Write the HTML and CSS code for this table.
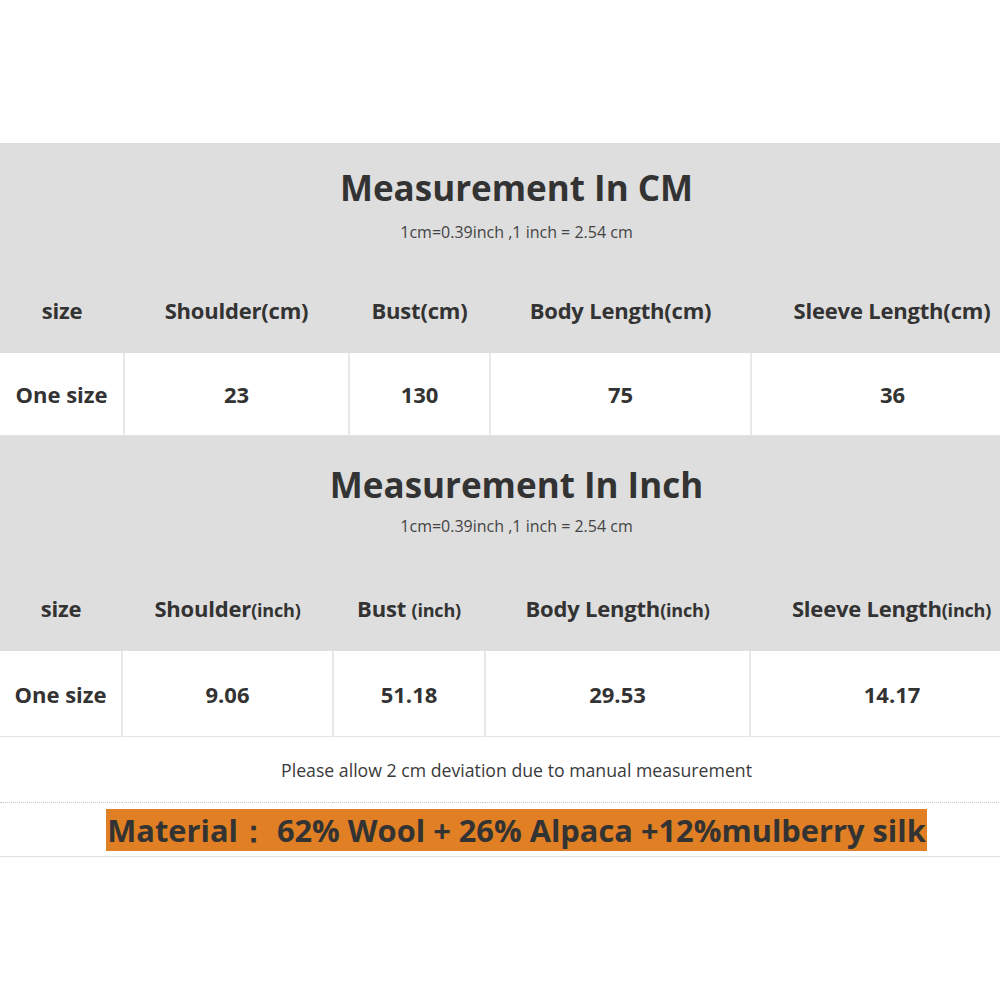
FILE: index.html
```html
<!DOCTYPE html>
<html>
<head>
<meta charset="utf-8">
<link rel="stylesheet" href="styles.css">
</head>
<body>
<div class="page">
  <table class="chart chart-cm">
    <colgroup>
      <col class="c1"><col class="c2"><col class="c3"><col class="c4"><col class="c5">
    </colgroup>
    <tr class="title-row">
      <td colspan="5">
        <div class="title">Measurement In CM</div>
        <div class="sub">1cm=0.39inch ,1 inch = 2.54 cm</div>
      </td>
    </tr>
    <tr class="head-row">
      <th>size</th><th>Shoulder(cm)</th><th>Bust(cm)</th><th>Body Length(cm)</th><th>Sleeve Length(cm)</th>
    </tr>
    <tr class="data-row">
      <td>One size</td><td>23</td><td>130</td><td>75</td><td>36</td>
    </tr>
  </table>
  <table class="chart chart-inch">
    <colgroup>
      <col class="c1"><col class="c2"><col class="c3"><col class="c4"><col class="c5">
    </colgroup>
    <tr class="title-row">
      <td colspan="5">
        <div class="title">Measurement In Inch</div>
        <div class="sub">1cm=0.39inch ,1 inch = 2.54 cm</div>
      </td>
    </tr>
    <tr class="head-row">
      <th>size</th><th>Shoulder<span class="unit">(inch)</span></th><th>Bust <span class="unit">(inch)</span></th><th>Body Length<span class="unit">(inch)</span></th><th>Sleeve Length<span class="unit">(inch)</span></th>
    </tr>
    <tr class="data-row">
      <td>One size</td><td>9.06</td><td>51.18</td><td>29.53</td><td>14.17</td>
    </tr>
    <tr class="note-row">
      <td colspan="5">Please allow 2 cm deviation due to manual measurement</td>
    </tr>
    <tr class="material-row">
      <td colspan="5"><span class="material">Material：&nbsp;62% Wool + 26% Alpaca +12%mulberry silk</span></td>
    </tr>
  </table>
</div>
</body>
</html>
```
FILE: styles.css
```css
html, body {
  margin: 0;
  padding: 0;
  background: #ffffff;
}
body {
  overflow: hidden;
  font-family: "Open Sans", "Noto Sans", "Liberation Sans", sans-serif;
  color: #333333;
}
.page {
  width: 1033px;
  padding-top: 143px;
}
.chart {
  width: 1033px;
  border-collapse: collapse;
  table-layout: fixed;
}
.chart-cm .c1 { width: 124px; }
.chart-cm .c2 { width: 225px; }
.chart-cm .c3 { width: 141px; }
.chart-cm .c4 { width: 261px; }
.chart-cm .c5 { width: 282px; }
.chart-inch .c1 { width: 122px; }
.chart-inch .c2 { width: 211px; }
.chart-inch .c3 { width: 152px; }
.chart-inch .c4 { width: 265px; }
.chart-inch .c5 { width: 283px; }

.chart td, .chart th {
  padding: 0;
  text-align: center;
  vertical-align: middle;
}
.title-row td {
  background: #dedede;
  height: 124px;
  vertical-align: top;
}
.chart-inch .title-row td {
  height: 128px;
}
.title {
  font-size: 35px;
  font-weight: 700;
  line-height: 40px;
  padding-top: 25px;
  color: #333333;
}
.chart-inch .title {
  padding-top: 29px;
}
.sub {
  font-size: 16px;
  line-height: 22px;
  margin-top: 13px;
  color: #444444;
}
.chart-inch .sub {
  margin-top: 10px;
}
.head-row th {
  background: #dedede;
  height: 86px;
  font-size: 22px;
  font-weight: 700;
  color: #333333;
  letter-spacing: -0.2px;
  white-space: nowrap;
}
.chart-inch .head-row th {
  height: 87px;
}
.unit {
  font-size: 18px;
}
.data-row td {
  height: 82px;
  font-size: 22px;
  font-weight: 700;
  color: #333333;
  border-left: 2px solid #e8e8e8;
  border-bottom: 1px solid #e4e4e4;
}
.chart-inch .data-row td {
  height: 85px;
}
.data-row td:first-child {
  border-left: none;
}
.note-row td {
  height: 65px;
  font-size: 17.7px;
  color: #3a3a3a;
  border-bottom: 1px dotted #c8c8c8;
}
.material-row td {
  height: 53px;
  border-bottom: 1px solid #e0e0e0;
}
.material {
  display: inline-block;
  vertical-align: middle;
  background: #e07f24;
  font-size: 30.8px;
  font-weight: 700;
  line-height: 42px;
  color: #333333;
  padding: 0 1px;
  white-space: nowrap;
}
```
